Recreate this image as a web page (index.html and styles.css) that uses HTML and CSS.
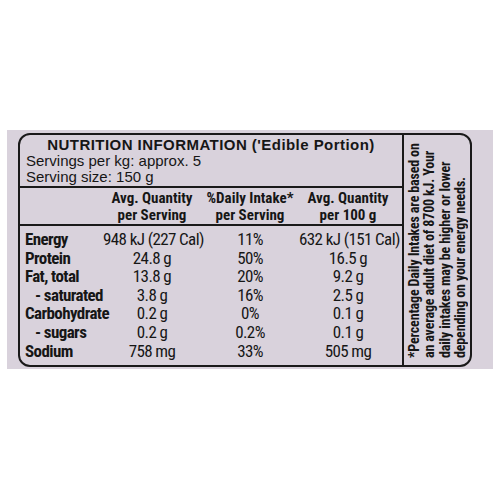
FILE: index.html
```html
<!DOCTYPE html>
<html lang="en">
<head>
    <meta charset="UTF-8">
    <meta name="viewport" content="width=device-width, initial-scale=1.0">
    <title>Nutrition Information</title>
    <link rel="stylesheet" href="styles.css">
</head>
<body>
    <div class="label-panel">
        <div class="panel-box">
            <div class="main">
                <div class="intro">
                    <h1 class="title">NUTRITION INFORMATION ('Edible Portion)</h1>
                    <p>Servings per kg: approx. 5</p>
                    <p>Serving size: 150 g</p>
                </div>
                <div class="facts facts-head">
                    <div></div>
                    <div>Avg. Quantity<br>per Serving</div>
                    <div>%Daily Intake*<br>per Serving</div>
                    <div>Avg. Quantity<br>per 100 g</div>
                </div>
                <div class="facts facts-body">
                    <div class="name">Energy</div>
                    <div>948 kJ (227 Cal)</div>
                    <div>11%</div>
                    <div>632 kJ (151 Cal)</div>

                    <div class="name">Protein</div>
                    <div>24.8 g</div>
                    <div>50%</div>
                    <div>16.5 g</div>

                    <div class="name">Fat, total</div>
                    <div>13.8 g</div>
                    <div>20%</div>
                    <div>9.2 g</div>

                    <div class="name sub">- saturated</div>
                    <div>3.8 g</div>
                    <div>16%</div>
                    <div>2.5 g</div>

                    <div class="name">Carbohydrate</div>
                    <div>0.2 g</div>
                    <div>0%</div>
                    <div>0.1 g</div>

                    <div class="name sub">- sugars</div>
                    <div>0.2 g</div>
                    <div>0.2%</div>
                    <div>0.1 g</div>

                    <div class="name">Sodium</div>
                    <div>758 mg</div>
                    <div>33%</div>
                    <div>505 mg</div>
                </div>
            </div>
            <div class="footnote-col">
                <p class="footnote">*Percentage Daily Intakes are based on an average adult diet of 8700 kJ. Your daily intakes may be higher or lower depending on your energy needs.</p>
            </div>
        </div>
    </div>
</body>
</html>
```

FILE: styles.css
```css
body {
    margin: 0;
    background-color: #ffffff;
    color: #161616;
    font-family: "Liberation Sans", Arial, sans-serif;
}
.label-panel {
    box-sizing: border-box;
    width: 486px;
    height: 239px;
    margin: 130px 0 0 7px;
    padding: 3px 0 0 11px;
    background-color: #d9d2dc;
}
.panel-box {
    box-sizing: border-box;
    display: flex;
    width: 454px;
    height: 234px;
    border: 2px solid #1a1a1a;
    border-radius: 12px;
}
.main {
    flex: 1;
}
.intro {
    padding: 2px 0 1px 6px;
    border-bottom: 2px solid #1a1a1a;
}
.title {
    margin: 0 0 0 -6px;
    font-size: 15px;
    line-height: 16px;
    letter-spacing: 0.45px;
    text-align: center;
    font-weight: bold;
}
.intro p {
    margin: 0;
    font-size: 15px;
    line-height: 16px;
}
.facts {
    display: grid;
    grid-template-columns: 78px 98px 98px 98px;
    padding-left: 5px;
    font-family: "Roboto Condensed", "Liberation Sans", sans-serif;
    text-align: center;
    white-space: nowrap;
}
.facts-head {
    padding-top: 2px;
    padding-bottom: 1px;
    border-bottom: 2px solid #1a1a1a;
    font-size: 15px;
    line-height: 16.5px;
    font-weight: bold;
}
.facts-body {
    padding-top: 4px;
    font-size: 17px;
    line-height: 18.6px;
    letter-spacing: -0.6px;
}
.facts-body .name {
    text-align: left;
    font-weight: bold;
}
.facts-body .sub {
    padding-left: 10px;
}
.footnote-col {
    box-sizing: border-box;
    display: flex;
    width: 68px;
    border-left: 2px solid #1a1a1a;
}
.footnote {
    flex: 1;
    margin: 0;
    padding: 7px 3px 0 0;
    writing-mode: vertical-rl;
    transform: rotate(180deg);
    font-family: "Roboto Condensed", "Liberation Sans", sans-serif;
    font-size: 14px;
    line-height: 15.3px;
    letter-spacing: -0.15px;
    font-weight: bold;
}
```
